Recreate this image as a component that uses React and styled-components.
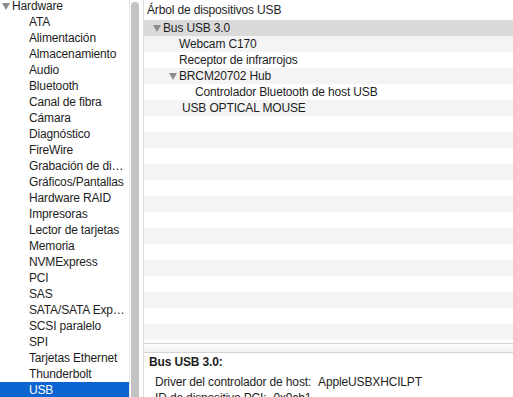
import React from "react";
import styled, { createGlobalStyle } from "styled-components";

const Global = createGlobalStyle`
  html, body { margin: 0; padding: 0; background: #fff; }
  body { font-family: "Liberation Sans", Arial, sans-serif; font-size: 12px; letter-spacing: -0.15px; color: #1e1e1e; }
  #root { width: 513px; height: 397px; overflow: hidden; }
`;

const Window = styled.div`
  display: flex;
  width: 513px;
  height: 397px;
  overflow: hidden;
  background: #fff;
`;

const Sidebar = styled.div`
  width: 129px;
  flex: none;
  border-right: 1px solid #e4e4e4;
  margin-top: -2px;
  display: flex;
  flex-direction: column;
`;

const SideRow = styled.div`
  height: 16px;
  line-height: 16px;
  padding-left: ${(p) => p.$indent}px;
  padding-right: 2px;
  white-space: nowrap;
  overflow: hidden;
  text-overflow: ellipsis;
  background: ${(p) => (p.$selected ? "#0b64d0" : "transparent")};
  color: ${(p) => (p.$selected ? "#fff" : "#1e1e1e")};
  flex: none;
`;

const Tri = styled.span`
  display: inline-block;
  width: 0;
  height: 0;
  border-left: 4px solid transparent;
  border-right: 4px solid transparent;
  border-top: 7px solid #8c8c8c;
  margin-right: 2px;
  vertical-align: 0px;
`;

const ScrollGutter = styled.div`
  width: 14px;
  flex: none;
  border-right: 1px solid #dedede;
  padding: 2px 0 0 1px;
  box-sizing: border-box;
`;

const Thumb = styled.div`
  width: 8px;
  height: 420px;
  border-radius: 4px;
  background: #c3c3c3;
`;

const Main = styled.div`
  flex: 1;
  display: flex;
  flex-direction: column;
  min-width: 0;
`;

const Header = styled.div`
  height: 20px;
  line-height: 20px;
  padding-left: 3px;
  flex: none;
`;

const Tree = styled.div`
  display: flex;
  flex-direction: column;
  flex: none;
`;

const TreeRow = styled.div`
  height: 16px;
  line-height: 16px;
  padding-left: ${(p) => p.$indent}px;
  white-space: nowrap;
  background: ${(p) => (p.$selected ? "#dadada" : p.$odd ? "#f4f4f4" : "#fff")};
`;

const Splitter = styled.div`
  margin-top: 3px;
  height: 8px;
  flex: none;
  border-top: 1px solid #d4d4d4;
  border-bottom: 1px solid #d4d4d4;
  background: linear-gradient(#fdfdfd, #f3f3f3);
`;

const Detail = styled.div`
  padding: 1px 0 0 5px;
`;

const DetailTitle = styled.div`
  font-weight: 700;
  height: 16px;
  line-height: 16px;
  margin-bottom: 4px;
`;

const DetailLine = styled.div`
  display: flex;
  height: 16px;
  line-height: 16px;
  padding-left: 6px;
  white-space: nowrap;
`;

const Label = styled.span`
  flex: none;
  margin-right: 7px;
`;

const sideItems = [
  "ATA", "Alimentación", "Almacenamiento", "Audio", "Bluetooth", "Canal de fibra",
  "Cámara", "Diagnóstico", "FireWire", "Grabación de discos", "Gráficos/Pantallas",
  "Hardware RAID", "Impresoras", "Lector de tarjetas", "Memoria", "NVMExpress", "PCI",
  "SAS", "SATA/SATA Express", "SCSI paralelo", "SPI", "Tarjetas Ethernet", "Thunderbolt", "USB",
];

const tree = [
  { text: "Bus USB 3.0", indent: 9, tri: true },
  { text: "Webcam C170", indent: 35 },
  { text: "Receptor de infrarrojos", indent: 35 },
  { text: "BRCM20702 Hub", indent: 25, tri: true },
  { text: "Controlador Bluetooth de host USB", indent: 51 },
  { text: "USB OPTICAL MOUSE", indent: 38 },
];

export default function App() {
  const rows = Array.from({ length: 20 }, (_, i) => tree[i] || { text: "", indent: 0 });
  return (
    <>
      <Global />
      <Window>
        <Sidebar>
          <SideRow $indent={2}>
            <Tri />Hardware
          </SideRow>
          {sideItems.map((s) => (
            <SideRow key={s} $indent={29} $selected={s === "USB"}>
              {s}
            </SideRow>
          ))}
        </Sidebar>
        <ScrollGutter>
          <Thumb />
        </ScrollGutter>
        <Main>
          <Header>Árbol de dispositivos USB</Header>
          <Tree>
            {rows.map((r, i) => (
              <TreeRow key={i} $indent={r.indent} $selected={i === 0} $odd={i % 2 === 1}>
                {r.tri && <Tri />}
                {r.text}
              </TreeRow>
            ))}
          </Tree>
          <Splitter />
          <Detail>
            <DetailTitle>Bus USB 3.0:</DetailTitle>
            <DetailLine>
              <Label>Driver del controlador de host:</Label>
              <span>AppleUSBXHCILPT</span>
            </DetailLine>
            <DetailLine>
              <Label>ID de dispositivo PCI:</Label>
              <span>0x9cb1</span>
            </DetailLine>
          </Detail>
        </Main>
      </Window>
    </>
  );
}
